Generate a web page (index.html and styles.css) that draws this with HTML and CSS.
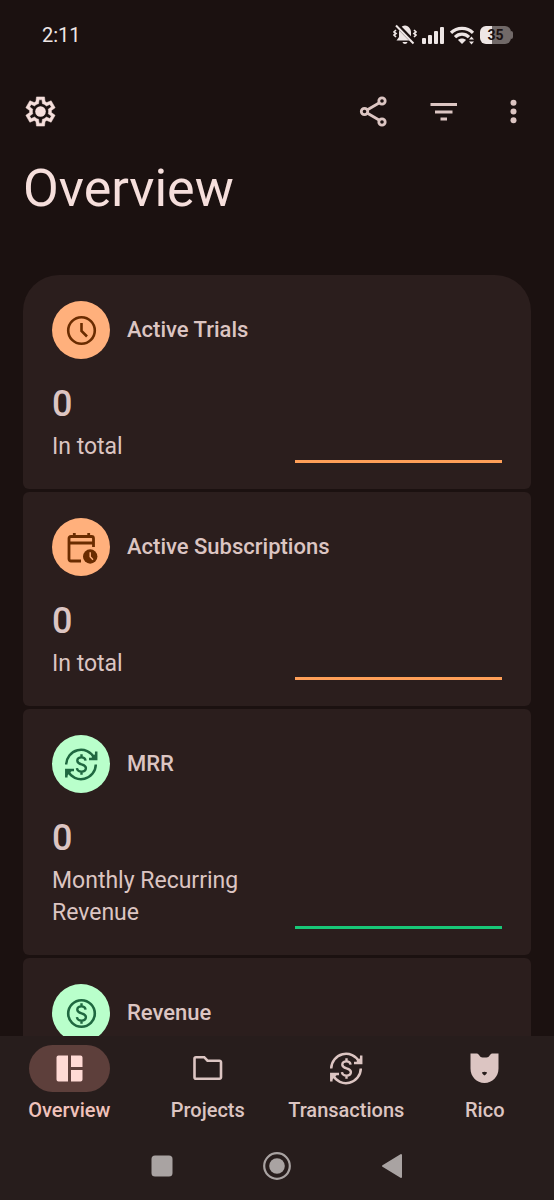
FILE: index.html
```html
<!DOCTYPE html>
<html lang="en">
<head>
<meta charset="utf-8">
<meta name="viewport" content="width=device-width, initial-scale=1">
<title>Overview</title>
<link rel="stylesheet" href="styles.css">
</head>
<body>
<svg class="defs" aria-hidden="true">
  <symbol id="dollar" viewBox="0 0 35 35">
    <path d="M21.6 13.6C21.2 11.5 19.7 10.4 17.5 10.4C15 10.4 13.3 11.7 13.3 13.8C13.3 18.6 21.9 16.2 21.9 21.1C21.9 23.3 20 24.6 17.5 24.6C15.1 24.6 13.3 23.4 12.9 21.1M17.5 7.2v3.2M17.5 24.6v3.2" fill="none" stroke="currentColor" stroke-width="2.4"/>
  </symbol>
  <symbol id="recurring" viewBox="0 0 35 35">
    <g fill="none" stroke="currentColor" stroke-width="2.5">
      <path d="M2.2 17.5A14.8 14.8 0 0 1 30.1 10.8M31.8 17.5A14.8 14.8 0 0 1 3.900 24.2"/>
      <path d="M32.2 4.5V12.1H25M2.300 30.5V22.9H10"/>
    </g>
    <path d="M33 5L33 13H25.500zM2 30L2 22H9.500z" fill="currentColor"/>
    <use href="#dollar"/>
  </symbol>
</svg>
<div class="app">
  <div class="status">
    <span>2:11</span>
    <div class="status-icons">
      <svg width="24" height="22" viewBox="0 0 24 22">
        <path d="M12 1.500c-4 .5-6 3.500-6 7v4.500L3.500 16.500h17L18 13V8.500c0-3.500-2-6.500-6-7zM9.500 18h5c-.5 2.500-4.500 2.500-5 0z" fill="#eee6e5"/>
        <path d="M4 1L21.500 19" stroke="#1b1110" stroke-width="4.500"/>
        <path d="M3 1.500L20.500 19.500" stroke="#eee6e5" stroke-width="2"/>
        <path d="M3 6L1 8l2 1.500L1 11l2 2M21 6l2 2-2 1.500 2 1.500-2 2" fill="none" stroke="#eee6e5" stroke-width="1.600"/>
      </svg>
      <svg width="23" height="19" viewBox="0 0 23 19" fill="#eee6e5">
        <rect x="0" y="12" width="4" height="6" rx="1"/><rect x="6" y="9" width="4" height="9" rx="1"/><rect x="12" y="5" width="4" height="13" rx="1"/><rect x="18" y="1" width="4" height="17" rx="1"/>
      </svg>
      <svg width="25" height="19" viewBox="0 0 25 19">
        <g fill="none" stroke="#eee6e5" stroke-width="3.200"><path d="M1 6.800C7 .8 17 .8 23 6.800M5 11.200c4-4 10-4 14 0"/></g>
        <path d="M8 14c2-2 6-2 8 0l-4 4zM21.500 10.500l2.500 3h-5zM21.500 18.500l2.500-3h-5z" fill="#eee6e5"/>
      </svg>
      <span class="battery">35</span>
    </div>
  </div>

  <header>
    <div class="toolbar">
      <button class="icon-button bright" aria-label="Settings">
        <svg viewBox="0 -960 960 960" fill="currentColor"><path stroke="currentColor" stroke-width="14" d="m370-80-16-128q-13-5-24.500-12T307-235l-119 50L78-375l103-78q-1-7-1-13.500v-27q0-6.500 1-13.500L78-585l110-190 119 50q11-8 23-15t24-12l16-128h220l16 128q13 5 24.500 12t22.500 15l119-50 110 190-103 78q1 7 1 13.500v27q0 6.500-2 13.500l103 78-110 190-118-50q-11 8-23 15t-24 12L590-80H370Zm70-80h79l14-106q31-8 57.500-23.500T639-327l99 41 39-68-86-65q5-14 7-29.500t2-31.500q0-16-2-31.500t-7-29.500l86-65-39-68-99 42q-22-23-48.500-38.500T533-694l-13-106h-79l-14 106q-31 8-57.500 23.500T321-633l-99-41-39 68 86 64q-5 15-7 30t-2 32q0 16 2 31t7 30l-86 65 39 68 99-42q22 23 48.500 38.500T427-266l13 106Z"/><circle cx="480" cy="-480" r="145"/></svg>
      </button>
      <div class="actions">
        <button class="icon-button" aria-label="Share">
          <svg viewBox="0 0 35 35" fill="none" stroke="currentColor" stroke-width="2.800"><circle cx="26" cy="7" r="3.200"/><circle cx="8.500" cy="17.500" r="3.200"/><circle cx="26" cy="28" r="3.200"/><path d="M23 9L11.500 15.800M11.500 19.200L23 26"/></svg>
        </button>
        <button class="icon-button" aria-label="Filter">
          <svg viewBox="0 0 35 35" fill="currentColor"><path d="M4.500 9h26.500v3H4.500zM9 16.500h17.500v3H9zM14.500 23.500h6.500v3h-6.500z"/></svg>
        </button>
        <button class="icon-button" aria-label="More options">
          <svg viewBox="0 0 35 35" fill="currentColor"><circle cx="17.500" cy="8.800" r="3"/><circle cx="17.500" cy="17.500" r="3"/><circle cx="17.500" cy="26.200" r="3"/></svg>
        </button>
      </div>
    </div>
    <h1>Overview</h1>
  </header>

  <main>
    <section class="card orange">
      <div class="card-head">
        <span class="badge"><svg viewBox="0 0 35 35" fill="none" stroke="currentColor" stroke-width="2.600"><circle cx="17.500" cy="17.500" r="13.300"/><path d="M17.500 10v8l5.500 5.500"/></svg></span>
        <h2>Active Trials</h2>
      </div>
      <p class="value">0</p>
      <div class="card-body"><p>In total</p><svg class="chart" viewBox="0 0 100 3" preserveAspectRatio="none"><path d="M0 1.500H100" stroke="currentColor" stroke-width="3"/></svg></div>
    </section>
    <section class="card orange">
      <div class="card-head">
        <span class="badge"><svg viewBox="0 0 35 35" fill="none" stroke="currentColor" stroke-width="2.800"><path d="M17 31H7c-1.200 0-2-.8-2-2V8.500c0-1.200.8-2 2-2h20.500c1.200 0 2 .8 2 2V17M5 13H29.500M10.300 3v4M24.700 3v4"/><circle cx="26.200" cy="26.500" r="7.200" fill="currentColor" stroke="none"/><path class="hand" d="M26.200 22.200v4.500l2.800 3" stroke-width="1.500"/></svg></span>
        <h2>Active Subscriptions</h2>
      </div>
      <p class="value">0</p>
      <div class="card-body"><p>In total</p><svg class="chart" viewBox="0 0 100 3" preserveAspectRatio="none"><path d="M0 1.500H100" stroke="currentColor" stroke-width="3"/></svg></div>
    </section>
    <section class="card green">
      <div class="card-head">
        <span class="badge"><svg><use href="#recurring"/></svg></span>
        <h2>MRR</h2>
      </div>
      <p class="value">0</p>
      <div class="card-body"><p>Monthly Recurring Revenue</p><svg class="chart" viewBox="0 0 100 3" preserveAspectRatio="none"><path d="M0 1.500H100" stroke="currentColor" stroke-width="3"/></svg></div>
    </section>
    <section class="card green">
      <div class="card-head">
        <span class="badge"><svg viewBox="0 0 35 35"><circle cx="17.500" cy="17.500" r="13.300" fill="none" stroke="currentColor" stroke-width="2.600"/><use href="#dollar"/></svg></span>
        <h2>Revenue</h2>
      </div>
    </section>
  </main>

  <div class="bottom">
    <nav>
      <a class="active" href="#overview"><span class="pill"><svg viewBox="0 0 35 35" fill="currentColor"><path d="M6.500 4.500H16v26H6.500a2 2 0 0 1-2-2v-22a2 2 0 0 1 2-2zM19 4.500h9.500a2 2 0 0 1 2 2V16H19zM19 19h11.500v9.500a2 2 0 0 1-2 2H19z"/></svg></span>Overview</a>
      <a href="#projects"><span class="pill"><svg viewBox="0 0 35 35" fill="none" stroke="currentColor" stroke-width="2.600"><path d="M6 6.200h8.200l3.300 3.500h12a1.500 1.500 0 0 1 1.500 1.500v15a1.500 1.500 0 0 1-1.500 1.500H6a1.500 1.500 0 0 1-1.500-1.500V7.700A1.500 1.500 0 0 1 6 6.200z"/></svg></span>Projects</a>
      <a href="#transactions"><span class="pill"><svg><use href="#recurring"/></svg></span>Transactions</a>
      <a href="#rico"><span class="pill"><svg viewBox="0 0 35 35"><path d="M3.500 2.500h6.500c2 0 2.500 4 5.500 4h4c3 0 3.500-4 5.500-4h6.500v15c0 8-6 14.500-14 14.500s-14-6.500-14-14.500z" fill="currentColor"/><path class="nose" d="M15.200 21.200q2.300-1 4.600 0q.8 1-2.300 3.300q-3.100-2.300-2.300-3.300z"/></svg></span>Rico</a>
    </nav>
    <div class="system">
      <button aria-label="Recent apps"><svg viewBox="0 0 30 30"><rect x="4.500" y="4.500" width="21" height="21" rx="3.500"/></svg></button>
      <button aria-label="Home"><svg viewBox="0 0 30 30"><circle cx="15" cy="15" r="12.800" fill="none" stroke="currentColor" stroke-width="2.200"/><circle cx="15" cy="15" r="7.800"/></svg></button>
      <button aria-label="Back"><svg viewBox="0 0 30 30"><path d="M6 15L24 4V26z" stroke="currentColor" stroke-width="2" stroke-linejoin="round"/></svg></button>
    </div>
  </div>
</div>
</body>
</html>
```
FILE: styles.css
```css
* {
  box-sizing: border-box;
}

body,
h1,
h2,
p {
  margin: 0;
  font-weight: 400;
}

body {
  background: #1b1110;
  color: #dcc5c2;
  font-family: Roboto, "Liberation Sans", sans-serif;
}

button {
  padding: 0;
  border: 0;
  background: none;
  color: inherit;
}

svg {
  display: block;
}

.defs {
  position: absolute;
  width: 0;
  height: 0;
}

.app {
  display: flex;
  flex-direction: column;
  height: 100vh;
}

.status {
  display: flex;
  align-items: center;
  justify-content: space-between;
  padding: 23px 43px 0 42px;
  color: #eee6e5;
  font-size: 20px;
  line-height: 24px;
}

.status-icons {
  display: flex;
  align-items: center;
  gap: 5px;
}

.battery {
  position: relative;
  width: 31px;
  height: 18px;
  border-radius: 6px;
  background: linear-gradient(90deg, #eee6e5 38%, #716968 38%);
  color: #1b1110;
  font-size: 14px;
  font-weight: 700;
  line-height: 18px;
  text-align: center;
}

.battery::after {
  content: "";
  position: absolute;
  left: 100%;
  top: 5px;
  width: 2px;
  height: 8px;
  border-radius: 0 2px 2px 0;
  background: #716968;
}

.toolbar {
  display: flex;
  justify-content: space-between;
  padding: 47px 23px 0;
}

.actions {
  display: flex;
  gap: 35px;
}

.icon-button,
.icon-button svg {
  width: 35px;
  height: 35px;
}

.bright,
h1 {
  color: #f6dfdc;
}

h1 {
  padding: 28px 23px 54px;
  font-size: 52px;
  line-height: 64px;
}

main {
  display: flex;
  flex: 1;
  flex-direction: column;
  gap: 3px;
  min-height: 0;
  padding: 0 23px;
  overflow: hidden;
}

.card {
  flex: none;
  padding: 26px 29px;
  border-radius: 6px;
  background: #2b1e1d;
}

.card:first-child {
  border-radius: 36px 36px 6px 6px;
}

.card-head {
  display: flex;
  align-items: center;
  gap: 17px;
}

.badge {
  display: grid;
  place-items: center;
  width: 58px;
  height: 58px;
  border-radius: 50%;
}

.badge svg {
  width: 35px;
  height: 35px;
}

.orange .badge {
  background: #ffb07c;
  color: #6a2c00;
}

.green .badge {
  background: #b9ffcb;
  color: #1f6840;
}

.hand {
  stroke: #ffb07c;
}

h2 {
  font-size: 22px;
  font-weight: 500;
  line-height: 32px;
}

.value {
  padding: 25px 0 7px;
  font-size: 36px;
  font-weight: 500;
  line-height: 40px;
}

.card-body {
  display: grid;
  grid-template-columns: 1fr 1fr;
  align-items: end;
  gap: 36px;
  font-size: 23px;
  line-height: 32px;
}

.chart {
  width: 100%;
  height: 3px;
}

.orange .chart {
  color: #ff9f58;
}

.green .chart {
  color: #18c878;
}

.bottom {
  background: #271d1c;
}

nav {
  display: grid;
  grid-template-columns: repeat(4, 1fr);
  padding-top: 9px;
}

nav a {
  display: flex;
  flex-direction: column;
  align-items: center;
  gap: 6px;
  color: inherit;
  font-size: 20px;
  font-weight: 500;
  line-height: 24px;
  text-decoration: none;
}

.pill {
  display: grid;
  place-items: center;
  width: 81px;
  height: 47px;
  border-radius: 24px;
}

.pill svg {
  width: 35px;
  height: 35px;
}

.active {
  color: #f0c2bb;
}

.active .pill {
  background: #5d3f3b;
  color: #ffdad5;
}

.nose {
  fill: #271d1c;
}

.system {
  display: flex;
  justify-content: center;
  gap: 85px;
  padding: 29px 0 19px;
  color: #a9a3a2;
}

.system svg {
  width: 30px;
  height: 30px;
  fill: currentColor;
}
```
